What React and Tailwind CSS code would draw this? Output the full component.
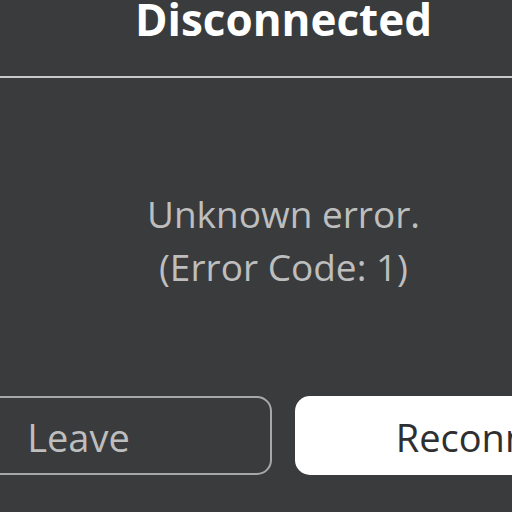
import React from "react";

export default function App() {
  return (
    <div
      className="w-[512px] h-[512px] overflow-hidden bg-[#393b3d]"
      style={{ fontFamily: '"Open Sans", "Noto Sans", sans-serif' }}
    >
      <div className="w-[797px] ml-[-115px] flex flex-col">
        {/* Titel */}
        <div className="h-[76px] flex justify-center">
          <h1 className="text-[44px] leading-[38px] font-bold text-white">
            Disconnected
          </h1>
        </div>
        <div className="h-[2px] bg-[#c8c8c8]" />

        {/* Meldung */}
        <div className="h-[318px] pt-[5px] flex flex-col items-center justify-center text-[#bebebe] text-[37px] leading-[53px] text-center">
          <p>Unknown error.</p>
          <p>(Error Code: 1)</p>
        </div>

        {/* Knoppen */}
        <div className="flex gap-[23px]">
          <button className="w-[387px] h-[79px] pt-[4px] rounded-[15px] border-2 border-[#a8a8a8] text-[#bebebe] text-[38px]">
            Leave
          </button>
          <button className="w-[387px] h-[79px] pt-[4px] rounded-[15px] bg-white text-[#2d2f31] text-[38px]">
            Reconnect
          </button>
        </div>
      </div>
    </div>
  );
}
